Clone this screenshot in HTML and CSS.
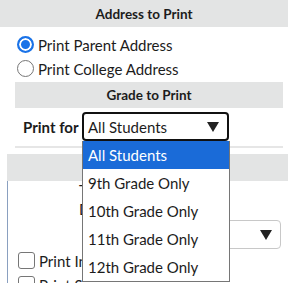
FILE: index.html
```html
<!DOCTYPE html>
<html>
<head>
<meta charset="utf-8">
<link rel="stylesheet" href="styles.css">
</head>
<body>
<div class="page">
  <div class="bar bar-full">Address to Print</div>
  <div class="radios">
    <label class="radio-row"><span class="radio on"></span>Print Parent Address</label>
    <label class="radio-row"><span class="radio"></span>Print College Address</label>
  </div>
  <div class="grade">
    <div class="bar">Grade to Print</div>
    <div class="for-row">
      <span class="for-label">Print for</span>
      <div class="select">All Students<span class="arrow"></span></div>
    </div>
    <div class="rule"></div>
  </div>
  <div class="third">
    <div class="bar bar-third"></div>
    <div class="third-body">
      <div class="t-line">T</div>
      <div class="t-line d">D</div>
      <div class="sel2-row"><div class="select2">me<span class="arrow"></span></div></div>
      <label class="check-row"><span class="check"></span>Print In</label>
      <label class="check-row"><span class="check"></span>Print S</label>
    </div>
  </div>
  <ul class="dropdown">
    <li class="opt active">All Students</li>
    <li class="opt">9th Grade Only</li>
    <li class="opt">10th Grade Only</li>
    <li class="opt">11th Grade Only</li>
    <li class="opt">12th Grade Only</li>
  </ul>
</div>
</body>
</html>
```
FILE: styles.css
```css
* { box-sizing: border-box; }
html, body { margin: 0; padding: 0; background: #fff; overflow: hidden; }
body {
  font-family: Lato, "Noto Sans", sans-serif;
  font-size: 15px;
  color: #1c1c1c;
  width: 288px;
  height: 283px;
}
.page { position: relative; width: 288px; height: 283px; overflow: hidden; }
.bar {
  background: #e3e4e4;
  height: 26px;
  display: flex;
  align-items: center;
  justify-content: center;
  font-weight: 700;
  font-size: 13.5px;
}
.bar-full { height: 27px; }
.radios { padding: 9px 0 5px 17px; display: flex; flex-direction: column; gap: 7px; }
.radio-row { display: flex; align-items: center; gap: 4px; height: 17px; }
.radio {
  width: 17px; height: 17px; border-radius: 50%;
  border: 1px solid #767676; background: #fff; flex: none;
}
.radio.on { border: 2px solid #1a73e8; box-shadow: inset 0 0 0 2px #fff; background: #1a73e8; }
.grade { margin: 0 5px 0 15px; }
.for-row { display: flex; align-items: center; padding: 4px 0 5px 8px; gap: 5px; }
.for-label { font-weight: 700; width: 54px; white-space: nowrap; flex: none; }
.select {
  width: 147px; height: 29px; flex: none;
  border: 2px solid #111; border-radius: 4px;
  display: flex; align-items: center; justify-content: space-between;
  padding: 0 8px 0 4px;
}
.arrow {
  width: 0; height: 0;
  border-left: 6px solid transparent; border-right: 6px solid transparent;
  border-top: 10px solid #222;
}
.rule { height: 2px; background: #e6e6e6; }
.third { margin: 6px 0 0 7px; }
.bar-third { height: 27px; }
.third-body { border-left: 1px solid #8aa0c0; padding: 0 0 0 10px; height: 120px; }
.t-line { padding-left: 61px; height: 19px; line-height: 19px; }
.sel2-row { display: flex; justify-content: flex-end; padding-right: 7px; margin-top: 1px; }
.select2 {
  width: 140px; height: 29px;
  border: 1px solid #c8c8c8; border-radius: 4px;
  display: flex; align-items: center; justify-content: space-between;
  padding: 0 8px 0 5px;
}
.check-row { display: flex; align-items: center; gap: 4px; height: 17px; margin-top: 3px; }
.check-row + .check-row { margin-top: 7px; }
.check { width: 17px; height: 17px; border: 1px solid #767676; border-radius: 3px; background: #fff; flex: none; }
.dropdown {
  position: absolute; left: 82px; top: 141px; width: 148px;
  margin: 0; padding: 0; list-style: none;
  background: #fff; border: 1px solid #767676; border-top: none;
}
.opt { height: 28px; line-height: 28px; padding-left: 5px; }
.opt.active { background: #1a6bd8; color: #fff; }
```
